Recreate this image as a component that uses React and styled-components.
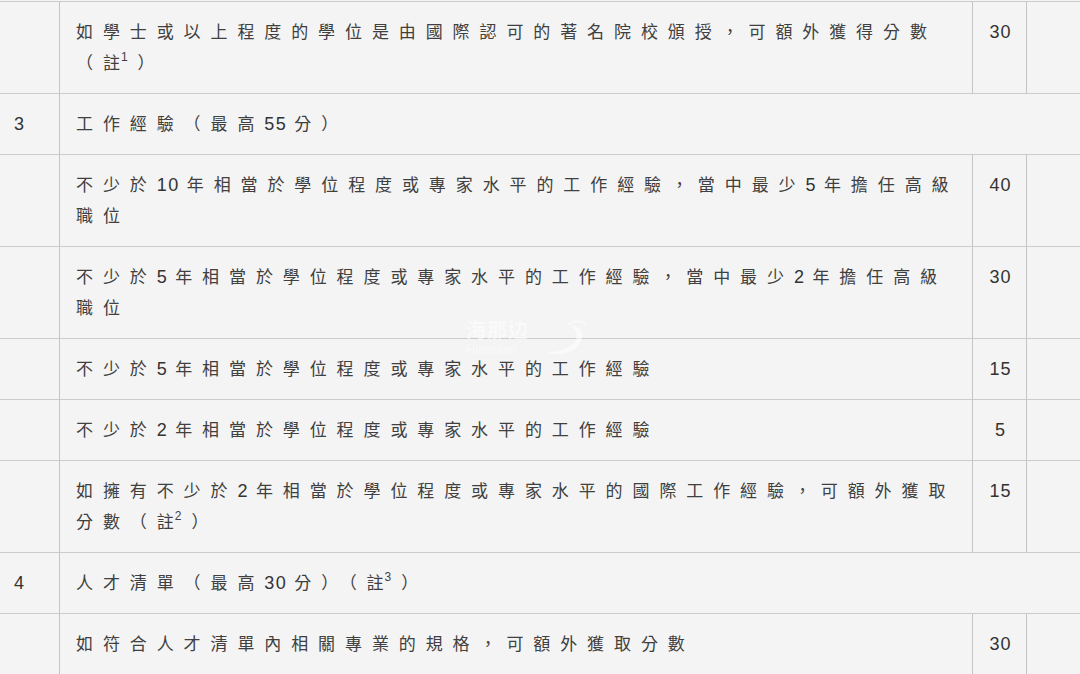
import React from "react";
import styled, { createGlobalStyle } from "styled-components";

const GlobalStyle = createGlobalStyle`
  html, body {
    margin: 0;
    padding: 0;
    background: #f4f4f4;
  }
  body {
    font-family: "Liberation Sans", "Noto Sans CJK TC", sans-serif;
    color: #333;
  }
`;

const Page = styled.div`
  position: relative;
  width: 1080px;
  height: 674px;
  overflow: hidden;
  padding-top: 1px;
  box-sizing: border-box;
`;

const Table = styled.div`
  width: 1150px;
  border-top: 1px solid #cbcbcb;
`;

const Row = styled.div`
  display: grid;
  grid-template-columns: 59px 913px 54px 124px;
  border-bottom: 1px solid #cbcbcb;
`;

const Cell = styled.div`
  box-sizing: border-box;
  padding: ${(p) => (p.$index ? "15px 0 14px 14px" : p.$score ? "15px 0 14px 2px" : "15px 12px 14px 16px")};
  border-left: ${(p) => (p.$index ? "none" : "1px solid #c4c4c4")};
  grid-column: ${(p) => (p.$span ? "2 / -1" : "auto")};
  text-align: ${(p) => (p.$score ? "center" : "left")};
  font-size: ${(p) => (p.$index || p.$score ? "18px" : "17px")};
  line-height: 31px;
  letter-spacing: ${(p) => (p.$index || p.$score ? "1px" : "9.9px")};
  color: ${(p) => (p.$index || p.$score ? "#333" : "#404040")};
`;

const Num = styled.span`
  font-size: 18px;
  line-height: 0;
  letter-spacing: 1.5px;
  margin-right: 7px;
  color: #333;
`;

const Tight = styled.span`
  letter-spacing: 1px;
`;

const Note = styled.sup`
  font-size: 12px;
  letter-spacing: 0;
  line-height: 0;
  margin-right: 10px;
  vertical-align: 8px;
`;

const Ref = ({ n }) => (
  <>
    <Tight>註</Tight>
    <Note>{n}</Note>
  </>
);

const Watermark = styled.div`
  position: absolute;
  left: 466px;
  top: 318px;
  display: flex;
  align-items: center;
  gap: 14px;
  color: #ffffff;
  opacity: 0.55;
  pointer-events: none;
`;

const MarkText = styled.div`
  display: flex;
  flex-direction: column;
  line-height: 1;
  span:first-child {
    font-size: 20px;
    font-weight: 700;
    letter-spacing: 1px;
  }
  span:last-child {
    font-size: 13px;
    margin-top: 2px;
  }
`;

const rows = [
  {
    text: (
      <>
        如學士或以上程度的學位是由國際認可的著名院校頒授，可額外獲得分數（<Ref n="1" />）
      </>
    ),
    score: "30",
  },
  { index: "3", text: (<>工作經驗（最高<Num>55</Num>分）</>) },
  {
    text: (
      <>
        不少於<Num>10</Num>年相當於學位程度或專家水平的工作經驗，當中最少<Num>5</Num>年擔任高級職位
      </>
    ),
    score: "40",
  },
  {
    text: (
      <>
        不少於<Num>5</Num>年相當於學位程度或專家水平的工作經驗，當中最少<Num>2</Num>年擔任高級職位
      </>
    ),
    score: "30",
  },
  { text: (<>不少於<Num>5</Num>年相當於學位程度或專家水平的工作經驗</>), score: "15" },
  { text: (<>不少於<Num>2</Num>年相當於學位程度或專家水平的工作經驗</>), score: "5" },
  {
    text: (
      <>
        如擁有不少於<Num>2</Num>年相當於學位程度或專家水平的國際工作經驗，可額外獲取分數（<Ref n="2" />）
      </>
    ),
    score: "15",
  },
  {
    index: "4",
    text: (
      <>
        人才清單（最高<Num>30</Num>分）（<Ref n="3" />）
      </>
    ),
  },
  { text: "如符合人才清單內相關專業的規格，可額外獲取分數", score: "30" },
];

export default function App() {
  return (
    <Page>
      <GlobalStyle />
      <Table>
        {rows.map((r, i) => (
          <Row key={i}>
            <Cell $index>{r.index || ""}</Cell>
            {r.score ? (
              <>
                <Cell>{r.text}</Cell>
                <Cell $score>{r.score}</Cell>
                <Cell />
              </>
            ) : (
              <Cell $span>{r.text}</Cell>
            )}
          </Row>
        ))}
      </Table>
      <Watermark>
        <MarkText>
          <span>海那边</span>
          <span>Hinabian</span>
        </MarkText>
        <svg width="48" height="40" viewBox="0 0 48 40" fill="none">
          <path d="M4 34 C14 38 32 36 38 24 C42 15 36 6 27 8 C34 11 36 18 31 25 C25 31 14 34 4 34 Z" fill="#fff" />
          <path d="M25 7 C30 2 39 2 44 7" stroke="#fff" strokeWidth="2" />
        </svg>
      </Watermark>
    </Page>
  );
}
